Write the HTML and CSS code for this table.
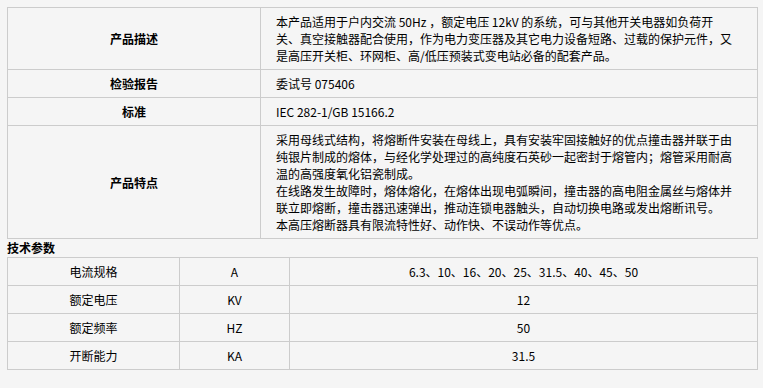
FILE: index.html
```html
<!DOCTYPE html>
<html lang="zh-CN">
<head>
<meta charset="utf-8">
<title>产品参数</title>
<link rel="stylesheet" href="styles.css">
</head>
<body>
<div class="page">
  <table class="spec">
    <colgroup><col class="c-head"><col class="c-body"></colgroup>
    <tr>
      <th>产品描述</th>
      <td>本产品适用于户内交流 50Hz ，额定电压 12kV 的系统，可与其他开关电器如负荷开<br>关、真空接触器配合使用，作为电力变压器及其它电力设备短路、过载的保护元件，又<br>是高压开关柜、环网柜、高/低压预装式变电站必备的配套产品。</td>
    </tr>
    <tr>
      <th>检验报告</th>
      <td>委试号 075406</td>
    </tr>
    <tr>
      <th>标准</th>
      <td>IEC 282-1/GB 15166.2</td>
    </tr>
    <tr>
      <th>产品特点</th>
      <td>采用母线式结构，将熔断件安装在母线上，具有安装牢固接触好的优点撞击器并联于由纯银片制成的熔体，与经化学处理过的高纯度石英砂一起密封于熔管内；熔管采用耐高温的高强度氧化铝瓷制成。<br>在线路发生故障时，熔体熔化，在熔体出现电弧瞬间，撞击器的高电阻金属丝与熔体并联立即熔断，撞击器迅速弹出，推动连锁电器触头，自动切换电路或发出熔断讯号。<br>本高压熔断器具有限流特性好、动作快、不误动作等优点。</td>
    </tr>
  </table>
  <h3 class="section-title">技术参数</h3>
  <table class="params">
    <colgroup><col class="p1"><col class="p2"><col class="p3"></colgroup>
    <tr><td>电流规格</td><td>A</td><td>6.3、10、16、20、25、31.5、40、45、50</td></tr>
    <tr><td>额定电压</td><td>KV</td><td>12</td></tr>
    <tr><td>额定频率</td><td>HZ</td><td>50</td></tr>
    <tr><td>开断能力</td><td>KA</td><td>31.5</td></tr>
  </table>
</div>
</body>
</html>
```
FILE: styles.css
```css
html, body {
  margin: 0;
  padding: 0;
  background: #f5f5f5;
}
body {
  font-family: "Noto Sans CJK SC", "Noto Sans", sans-serif;
  font-size: 12px;
  line-height: 17px;
  color: #000;
}
.page {
  padding: 7px 0 0 7px;
  width: 750px;
}
table {
  border-collapse: collapse;
  width: 750px;
  table-layout: fixed;
}
th, td {
  border: 1px solid #cccccc;
  padding: 5px 0;
  vertical-align: middle;
}
.spec .c-head { width: 253px; }
.spec .c-body { width: 497px; }
.spec th {
  font-weight: bold;
  text-align: center;
}
.spec td {
  text-align: left;
  padding-left: 15px;
  padding-right: 18px;
}
.section-title {
  margin: 0;
  font-size: 12px;
  line-height: 18px;
  font-weight: bold;
}
.params .p1 { width: 172px; }
.params .p2 { width: 110px; }
.params .p3 { width: 468px; }
.params td {
  text-align: center;
}
```
